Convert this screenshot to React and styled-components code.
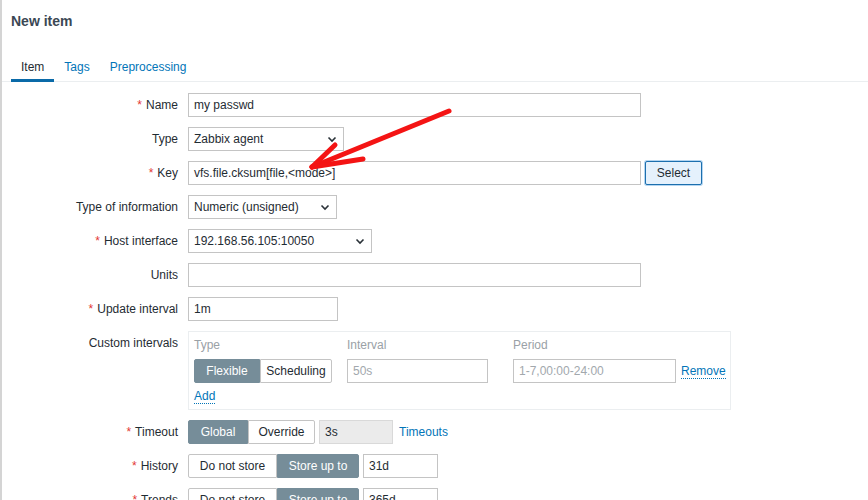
import styled, { createGlobalStyle } from "styled-components"

const GlobalStyle = createGlobalStyle`
  html, body { margin: 0; padding: 0; background: #fff; }
  body {
    font-family: "Liberation Sans", Arial, sans-serif;
    font-size: 12px;
    color: #1f2c33;
  }
`

const Page = styled.div`
  position: relative;
  width: 868px;
  height: 500px;
  overflow: hidden;
  box-sizing: border-box;
  border-left: 2px solid #d4d4d4;
  background: #fff;
`

const Title = styled.h1`
  margin: 0;
  padding: 13px 0 0 9px;
  font-size: 14px;
  line-height: 17px;
  font-weight: bold;
  color: #3b4854;
`

const TabList = styled.div`
  display: flex;
  margin-top: 22px;
  padding-left: 9px;
  border-bottom: 1px solid #ebeef0;
`

const Tab = styled.div`
  padding: 8px 10px 5px;
  line-height: 14px;
  margin-bottom: -1px;
  border-bottom: 3px solid ${p => (p.$active ? "#0a6aa8" : "transparent")};
  color: ${p => (p.$active ? "#1f2c33" : "#0275b8")};
`

const Form = styled.div`
  display: grid;
  grid-template-columns: 176px 1fr;
  column-gap: 10px;
  row-gap: 10px;
  padding-top: 11px;
`

const Label = styled.div`
  text-align: right;
  line-height: 24px;
  white-space: nowrap;
  color: #1f2c33;
`

const Star = styled.span`
  color: #e33734;
  margin-right: 4px;
`

const Field = styled.div`
  display: flex;
  align-items: center;
  min-height: 24px;
`

const Input = styled.div`
  box-sizing: border-box;
  width: ${p => p.$w}px;
  height: 24px;
  line-height: 22px;
  padding: 0 5px;
  border: 1px solid ${p => (p.$readonly ? "#d9d9d9" : "#c4c4c4")};
  background: ${p => (p.$readonly ? "#ebebeb" : "#fff")};
  color: ${p => (p.$placeholder ? "#a2a8ad" : "#1f2c33")};
  white-space: nowrap;
  overflow: hidden;
  margin-left: ${p => p.$ml || 0}px;
`

const SelectBox = styled.div`
  box-sizing: border-box;
  width: ${p => p.$w}px;
  height: 24px;
  padding: 0 6px 0 5px;
  border: 1px solid #c4c4c4;
  background: #fff;
  display: flex;
  align-items: center;
  justify-content: space-between;
  white-space: nowrap;
`

const Chevron = () => (
  <svg width="10" height="7" viewBox="0 0 10 7">
    <path d="M1.5 1.5 L5 5 L8.5 1.5" fill="none" stroke="#2a3238" strokeWidth="1.6" />
  </svg>
)

const Select = ({ w, children }) => (
  <SelectBox $w={w}>
    <span>{children}</span>
    <Chevron />
  </SelectBox>
)

const Button = styled.div`
  box-sizing: border-box;
  width: 57px;
  height: 24px;
  margin-left: 4px;
  line-height: 22px;
  text-align: center;
  background: #e5f1fc;
  border: 1px solid #1c6fae;
  border-radius: 2px;
  box-shadow: 0 0 0 1px #b4d5f0;
`

const Segmented = styled.div`
  display: flex;
  height: 24px;
`

const Segment = styled.div`
  box-sizing: border-box;
  width: ${p => p.$w}px;
  height: 24px;
  line-height: 22px;
  text-align: center;
  white-space: nowrap;
  border: 1px solid ${p => (p.$active ? "#768d99" : "#c4c4c4")};
  background: ${p => (p.$active ? "#768d99" : "#fff")};
  color: ${p => (p.$active ? "#fff" : "#1f2c33")};
  &:first-child { border-radius: 2px 0 0 2px; }
  &:last-child { border-radius: 0 2px 2px 0; }
  & + & { border-left-width: ${p => (p.$active ? 1 : 0)}px; }
`

const Link = styled.span`
  color: #0275b8;
  margin-left: ${p => p.$ml || 0}px;
  border-bottom: ${p => (p.$dotted ? "1px dotted #0275b8" : "none")};
  line-height: 13px;
`

const IntervalBox = styled.div`
  box-sizing: border-box;
  width: 543px;
  height: 79px;
  border: 1px solid #ebeef0;
  padding: 5px 5px 0;
`

const IntervalGrid = styled.div`
  display: grid;
  grid-template-columns: 153px 166px 168px auto;
  align-items: center;
  row-gap: 6px;
`

const ColHead = styled.div`
  color: #9aa1a6;
  line-height: 16px;
`

const AddRow = styled.div`
  margin-top: 5px;
  line-height: 16px;
`

const Arrow = styled.svg`
  position: absolute;
  left: 0;
  top: 0;
  pointer-events: none;
`

export default function App() {
  return (
    <>
      <GlobalStyle />
      <Page>
        <Title>New item</Title>
        <TabList>
          <Tab $active>Item</Tab>
          <Tab>Tags</Tab>
          <Tab>Preprocessing</Tab>
        </TabList>

        <Form>
          <Label><Star>*</Star>Name</Label>
          <Field><Input $w={453}>my passwd</Input></Field>

          <Label>Type</Label>
          <Field><Select w={156}>Zabbix agent</Select></Field>

          <Label><Star>*</Star>Key</Label>
          <Field>
            <Input $w={453}>vfs.file.cksum[file,&lt;mode&gt;]</Input>
            <Button>Select</Button>
          </Field>

          <Label>Type of information</Label>
          <Field><Select w={149}>Numeric (unsigned)</Select></Field>

          <Label><Star>*</Star>Host interface</Label>
          <Field><Select w={184}>192.168.56.105:10050</Select></Field>

          <Label>Units</Label>
          <Field><Input $w={453} /></Field>

          <Label><Star>*</Star>Update interval</Label>
          <Field><Input $w={150}>1m</Input></Field>

          <Label>Custom intervals</Label>
          <Field>
            <IntervalBox>
              <IntervalGrid>
                <ColHead>Type</ColHead>
                <ColHead>Interval</ColHead>
                <ColHead>Period</ColHead>
                <div />
                <Segmented>
                  <Segment $w={66} $active>Flexible</Segment>
                  <Segment $w={72}>Scheduling</Segment>
                </Segmented>
                <Input $w={141} $placeholder>50s</Input>
                <Input $w={163} $placeholder>1-7,00:00-24:00</Input>
                <div><Link $dotted>Remove</Link></div>
              </IntervalGrid>
              <AddRow><Link $dotted>Add</Link></AddRow>
            </IntervalBox>
          </Field>

          <Label><Star>*</Star>Timeout</Label>
          <Field>
            <Segmented>
              <Segment $w={60} $active>Global</Segment>
              <Segment $w={67}>Override</Segment>
            </Segmented>
            <Input $w={74} $ml={4} $readonly>3s</Input>
            <Link $ml={6}>Timeouts</Link>
          </Field>

          <Label><Star>*</Star>History</Label>
          <Field>
            <Segmented>
              <Segment $w={89}>Do not store</Segment>
              <Segment $w={82} $active>Store up to</Segment>
            </Segmented>
            <Input $w={75} $ml={4}>31d</Input>
          </Field>

          <Label><Star>*</Star>Trends</Label>
          <Field>
            <Segmented>
              <Segment $w={89}>Do not store</Segment>
              <Segment $w={82} $active>Store up to</Segment>
            </Segmented>
            <Input $w={75} $ml={4}>365d</Input>
          </Field>
        </Form>

        <Arrow width="868" height="500" viewBox="0 0 868 500">
          <g stroke="#f41414" strokeWidth="5" strokeLinecap="round" fill="none">
            <line x1="447" y1="111" x2="310" y2="167" />
            <line x1="310" y1="167" x2="333" y2="145" />
            <line x1="310" y1="167" x2="361" y2="159" />
          </g>
        </Arrow>
      </Page>
    </>
  )
}
